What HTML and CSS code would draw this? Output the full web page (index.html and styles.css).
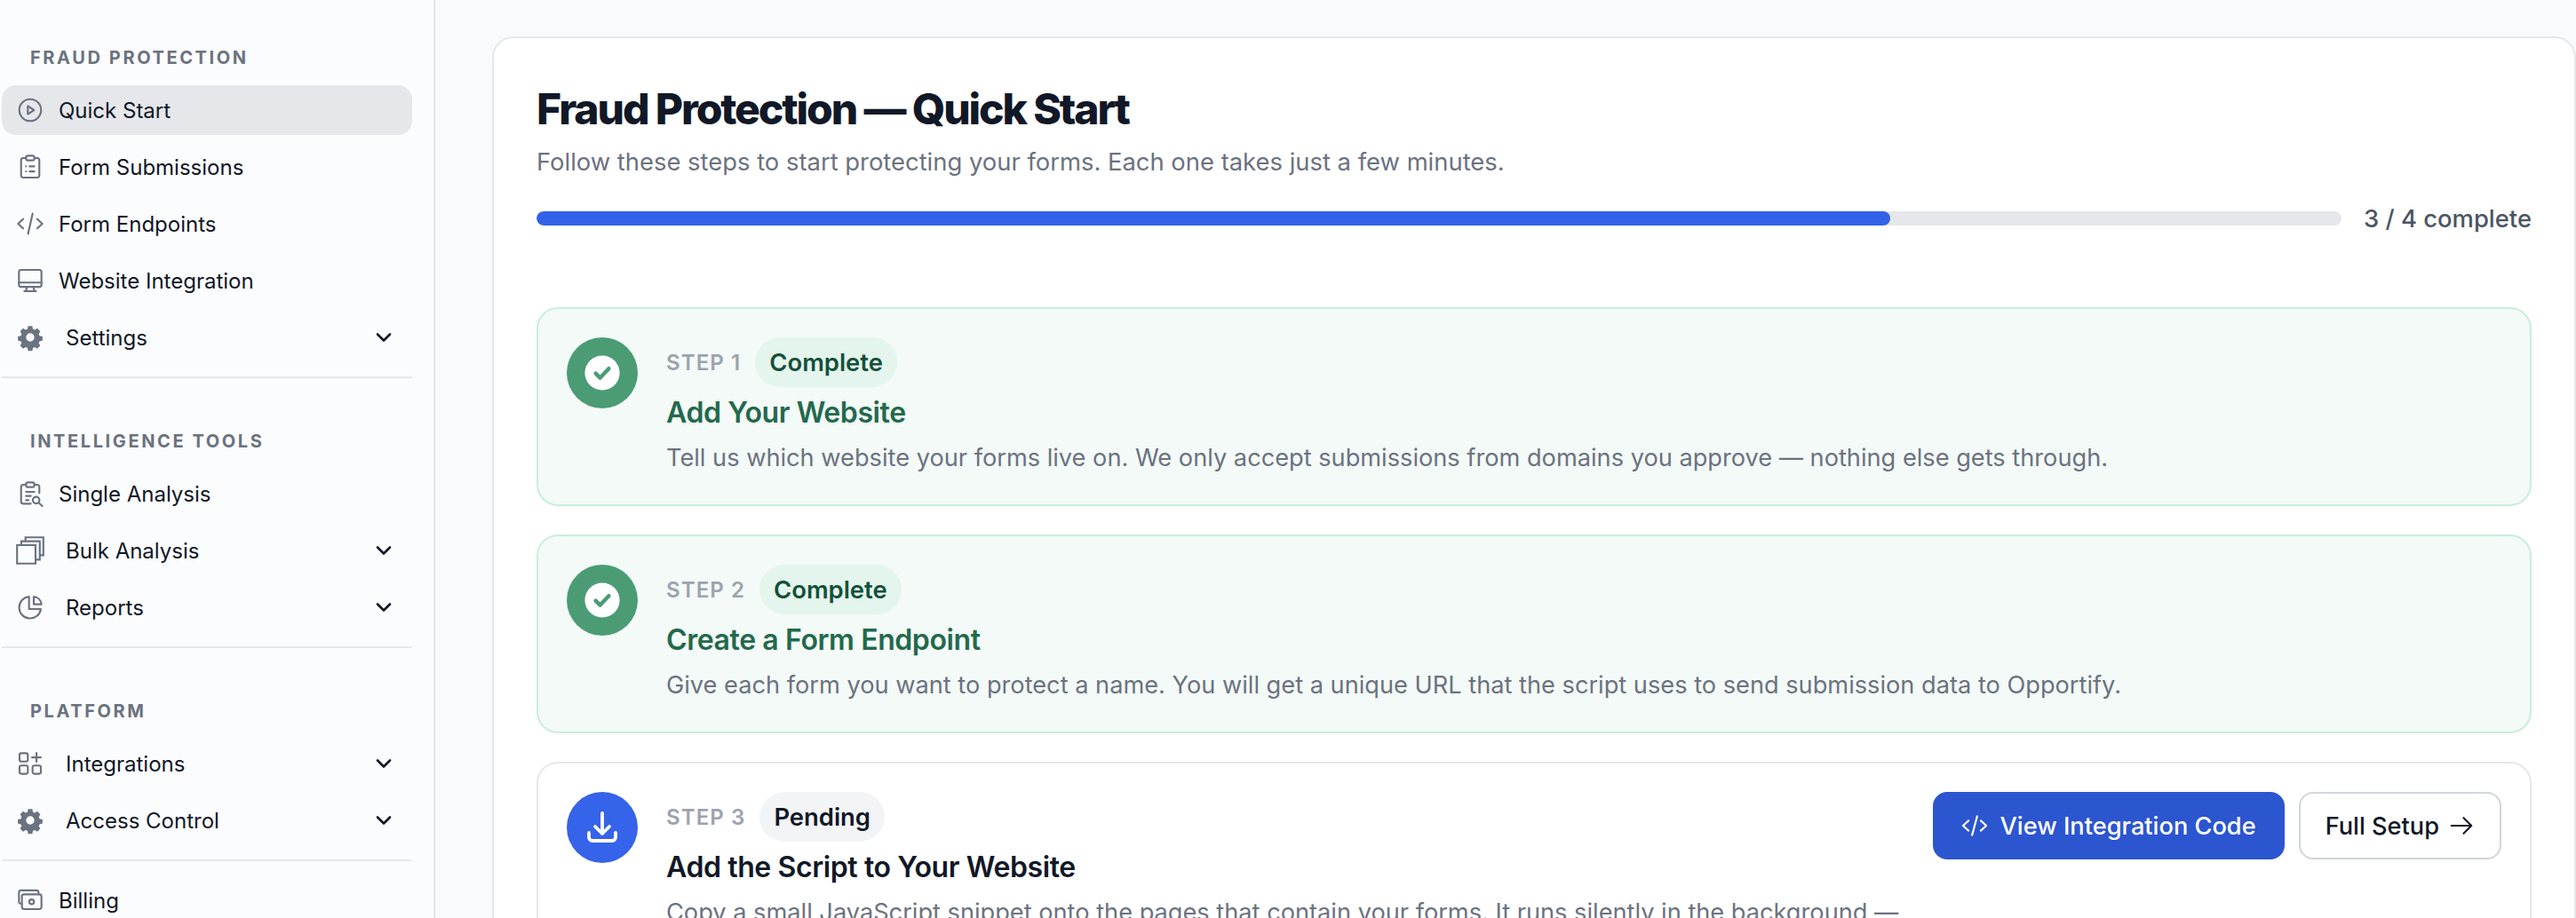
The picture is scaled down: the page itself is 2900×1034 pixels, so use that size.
FILE: index.html
```html
<!DOCTYPE html>
<html lang="en">
<head>
<meta charset="UTF-8" />
<title>Fraud Protection Quick Start</title>
<link rel="stylesheet" href="styles.css">
</head>
<body>
  <aside class="sidebar">
    <div class="nav-label">Fraud Protection</div>
    <nav class="nav-list">
      <a class="nav-item active">
        <svg class="nav-icon" viewBox="0 0 24 24"><circle cx="12" cy="12" r="9.200"/><path d="M10 8.600v6.800l5.200-3.400z"/></svg>
        <span>Quick Start</span>
      </a>
      <a class="nav-item">
        <svg class="nav-icon" viewBox="0 0 24 24"><path d="M8.500 4.500H6A1.800 1.800 0 0 0 4.300 6.300v13A1.800 1.800 0 0 0 6 21h12a1.800 1.800 0 0 0 1.700-1.700v-13A1.800 1.800 0 0 0 18 4.500h-2.500"/><rect x="8.500" y="2.500" width="7" height="4" rx="1.500"/><path d="M8.500 11.500h.01M11.500 11.500h4M8.500 15.800h.01M11.500 15.800h4"/></svg>
        <span>Form Submissions</span>
      </a>
      <a class="nav-item">
        <svg class="nav-icon" viewBox="0 0 24 24"><path d="M6 8 1.800 12 6 16M18 8l4.200 4-4.200 4M14 3.500 10.200 20.500"/></svg>
        <span>Form Endpoints</span>
      </a>
      <a class="nav-item">
        <svg class="nav-icon" viewBox="0 0 24 24"><rect x="2.500" y="3" width="19" height="14.300" rx="1.700"/><path d="M2.500 13.700h19M9.200 17.300l-.7 3.700h7l-.7-3.700M7 21h10"/></svg>
        <span>Website Integration</span>
      </a>
      <a class="nav-item has-menu">
        <svg class="nav-icon solid" viewBox="0 0 24 24"><path fill-rule="evenodd" d="M13.800 2.500l.5 2.500 1.600.7 2.100-1.300 2.500 2.500-1.300 2.200.7 1.500 2.500.6v3.500l-2.500.6-.7 1.500 1.300 2.200-2.500 2.500-2.100-1.300-1.600.7-.5 2.500h-3.600l-.5-2.500-1.600-.7-2.100 1.300-2.500-2.500 1.300-2.200-.7-1.500-2.500-.6v-3.500l2.500-.6.7-1.500-1.300-2.200 2.500-2.500 2.100 1.300 1.600-.7.5-2.500zM12 8.500a3.500 3.500 0 1 0 0 7 3.500 3.500 0 0 0 0-7z"/></svg>
        <span>Settings</span>
        <svg class="chevron" viewBox="0 0 18 12"><path d="M2 2.500l7 7 7-7"/></svg>
      </a>
    </nav>
    <hr class="nav-rule">

    <div class="nav-label">Intelligence Tools</div>
    <nav class="nav-list">
      <a class="nav-item">
        <svg class="nav-icon" viewBox="0 0 24 24"><path d="M8.500 4.500H6A1.700 1.700 0 0 0 4.300 6.200v12.600A1.700 1.700 0 0 0 6 20.500h6.500M15.500 4.500H18a1.700 1.700 0 0 1 1.700 1.700v5.300"/><rect x="8.500" y="2.500" width="7" height="4" rx="1.500"/><path d="M8.500 10.500h7M8.500 14h4M8.500 17.500h2"/><circle cx="17" cy="17.500" r="2.800"/><path d="M19.200 19.700l3 2.800"/></svg>
        <span>Single Analysis</span>
      </a>
      <a class="nav-item has-menu">
        <svg class="nav-icon" viewBox="0 0 24 24"><path d="M.9 7.500h15.600v15.600H.9zM4.500 7.500V4.200h15.600v15.600h-3.600M8 4.200V.9h15.100v15.100h-3" stroke-linejoin="miter" stroke-linecap="butt"/></svg>
        <span>Bulk Analysis</span>
        <svg class="chevron" viewBox="0 0 18 12"><path d="M2 2.500l7 7 7-7"/></svg>
      </a>
      <a class="nav-item has-menu">
        <svg class="nav-icon" viewBox="0 0 24 24"><path d="M11 3a9.200 9.200 0 1 0 10 10.500H11z"/><path d="M15 3v6.500h6.500A7.500 7.500 0 0 0 15 3z"/></svg>
        <span>Reports</span>
        <svg class="chevron" viewBox="0 0 18 12"><path d="M2 2.500l7 7 7-7"/></svg>
      </a>
    </nav>
    <hr class="nav-rule">

    <div class="nav-label">Platform</div>
    <nav class="nav-list">
      <a class="nav-item has-menu">
        <svg class="nav-icon" viewBox="0 0 24 24"><rect x="3" y="3.300" width="7" height="7" rx="1.500"/><rect x="3" y="13.700" width="7" height="7" rx="1.500"/><rect x="14" y="13.700" width="7" height="7" rx="1.500"/><path d="M13.500 6.800H21M17.300 3v7.500"/></svg>
        <span>Integrations</span>
        <svg class="chevron" viewBox="0 0 18 12"><path d="M2 2.500l7 7 7-7"/></svg>
      </a>
      <a class="nav-item has-menu">
        <svg class="nav-icon solid" viewBox="0 0 24 24"><path fill-rule="evenodd" d="M13.800 2.500l.5 2.500 1.600.7 2.100-1.300 2.500 2.500-1.300 2.200.7 1.500 2.500.6v3.500l-2.500.6-.7 1.500 1.300 2.200-2.500 2.500-2.100-1.300-1.600.7-.5 2.500h-3.600l-.5-2.500-1.600-.7-2.100 1.300-2.500-2.500 1.300-2.200-.7-1.500-2.500-.6v-3.500l2.500-.6.7-1.500-1.300-2.200 2.500-2.500 2.100 1.300 1.600-.7.500-2.500zM12 8.500a3.500 3.500 0 1 0 0 7 3.500 3.500 0 0 0 0-7z"/></svg>
        <span>Access Control</span>
        <svg class="chevron" viewBox="0 0 18 12"><path d="M2 2.500l7 7 7-7"/></svg>
      </a>
    </nav>
    <hr class="nav-rule">

    <nav class="nav-list">
      <a class="nav-item">
        <svg class="nav-icon" viewBox="0 0 24 24"><path d="M19 7V5.500A1.800 1.800 0 0 0 17.200 3.700H4.300A1.800 1.800 0 0 0 2.500 5.500v7.700A1.800 1.800 0 0 0 4.300 15H5"/><rect x="5" y="7" width="16.500" height="12.500" rx="1.800"/><circle cx="13.200" cy="13.300" r="2"/></svg>
        <span>Billing</span>
      </a>
    </nav>
  </aside>

  <main class="content">
    <section class="card">
      <h1>Fraud Protection — Quick Start</h1>
      <p class="lead">Follow these steps to start protecting your forms. Each one takes just a few minutes.</p>
      <div class="progress">
        <div class="progress-track"><div class="progress-fill" style="width: 75%"></div></div>
        <span class="progress-label">3 / 4 complete</span>
      </div>

      <div class="steps">
        <article class="step done">
          <div class="step-icon">
            <svg viewBox="0 0 24 24"><circle class="check-disc" cx="12" cy="12" r="9.800"/><path class="check-mark" d="M8.300 12.300l2.500 2.500 4.900-5.200"/></svg>
          </div>
          <div class="step-body">
            <div class="step-meta"><span class="step-num">Step 1</span><span class="badge">Complete</span></div>
            <h2>Add Your Website</h2>
            <p>Tell us which website your forms live on. We only accept submissions from domains you approve — nothing else gets through.</p>
          </div>
        </article>

        <article class="step done">
          <div class="step-icon">
            <svg viewBox="0 0 24 24"><circle class="check-disc" cx="12" cy="12" r="9.800"/><path class="check-mark" d="M8.300 12.300l2.500 2.500 4.900-5.200"/></svg>
          </div>
          <div class="step-body">
            <div class="step-meta"><span class="step-num">Step 2</span><span class="badge">Complete</span></div>
            <h2>Create a Form Endpoint</h2>
            <p>Give each form you want to protect a name. You will get a unique URL that the script uses to send submission data to Opportify.</p>
          </div>
        </article>

        <article class="step">
          <div class="step-icon">
            <svg class="download" viewBox="0 0 24 24"><path d="M12 4v11.500M8 11.500l4 4 4-4M4.500 15v2.500a2 2 0 0 0 2 2h11a2 2 0 0 0 2-2V15"/></svg>
          </div>
          <div class="step-body">
            <div class="step-meta"><span class="step-num">Step 3</span><span class="badge">Pending</span></div>
            <h2>Add the Script to Your Website</h2>
            <p>Copy a small JavaScript snippet onto the pages that contain your forms. It runs silently in the background —</p>
          </div>
          <div class="step-actions">
            <a class="btn btn-primary">
              <svg viewBox="0 0 24 24"><path d="M6.500 7.500 1.500 12l5 4.500M17.500 7.500l5 4.500-5 4.500M14.300 3.500 9.700 20.500"/></svg>
              View Integration Code
            </a>
            <a class="btn btn-outline">Full Setup
              <svg viewBox="0 0 24 24"><path d="M3 12h18M14 5l7 7-7 7"/></svg>
            </a>
          </div>
        </article>
      </div>
    </section>
  </main>
</body>
</html>
```

FILE: styles.css
```css
/* Base */
* {
  box-sizing: border-box;
}
html, body {
  height: 1034px;
  overflow: hidden;
}
body {
  margin: 0;
  display: flex;
  background: #f9fafb;
  font-family: Inter, "Liberation Sans", sans-serif;
  color: #111827;
}

/* Sidebar */
.sidebar {
  flex: 0 0 490px;
  height: 100%;
  padding: 51px 24px 0 2px;
  background: #fbfcfe;
  border-right: 2px solid #e5e7eb;
}
.nav-label {
  margin-left: 32px;
  margin-bottom: 17px;
  font-size: 20px;
  line-height: 28px;
  font-weight: 700;
  letter-spacing: 2.600px;
  text-transform: uppercase;
  color: #6b7280;
}
.nav-list {
  display: flex;
  flex-direction: column;
  gap: 8px;
}
.nav-item {
  display: flex;
  align-items: center;
  height: 56px;
  padding-left: 16px;
  padding-right: 23px;
  border-radius: 16px;
  font-size: 24px;
  color: #111827;
}
.nav-item.active {
  background: #e5e7eb;
}
.nav-icon {
  flex: none;
  width: 32px;
  height: 32px;
  margin-right: 16px;
  fill: none;
  stroke: #6b7280;
  stroke-width: 1.600;
  stroke-linecap: round;
  stroke-linejoin: round;
}
.nav-icon.solid {
  fill: #6b7280;
  stroke: none;
}
.has-menu span {
  flex: 1;
  margin-left: 8px;
}
.chevron {
  flex: none;
  width: 18px;
  height: 12px;
  fill: none;
  stroke: #111827;
  stroke-width: 2.600;
  stroke-linecap: round;
  stroke-linejoin: round;
}
.nav-rule {
  height: 2px;
  margin: 16px 0 57px;
  border: 0;
  background: #e5e7eb;
}
.nav-rule:last-of-type {
  margin-bottom: 16px;
}

/* Main card */
.content {
  flex: 1;
  min-width: 0;
  padding: 41px 0 0 64px;
}
.card {
  padding: 50px 48px 0;
  background: #fff;
  border: 2px solid #e5e7eb;
  border-radius: 24px;
}
h1 {
  margin: 0;
  font-size: 48px;
  line-height: 60px;
  font-weight: 800;
  letter-spacing: -2.100px;
  color: #111827;
}
.lead {
  margin: 9px 0 0;
  font-size: 27.400px;
  line-height: 40px;
  color: #6b7280;
}
.progress {
  display: flex;
  align-items: center;
  gap: 25px;
  margin-top: 24px;
}
.progress-track {
  flex: 1;
  height: 16px;
  border-radius: 8px;
  background: #e5e7eb;
  overflow: hidden;
}
.progress-fill {
  height: 100%;
  border-radius: 8px;
  background: #3162e8;
}
.progress-label {
  font-size: 27.400px;
  line-height: 40px;
  font-weight: 500;
  color: #4b5563;
}

/* Steps */
.steps {
  display: flex;
  flex-direction: column;
  gap: 32px;
  margin-top: 80px;
}
.step {
  display: flex;
  gap: 32px;
  padding: 32px;
  background: #fff;
  border: 2px solid #e5e7eb;
  border-radius: 24px;
}
.step.done {
  background: #f3faf7;
  border-color: #c9eedd;
}
.step-icon {
  flex: none;
  display: flex;
  align-items: center;
  justify-content: center;
  width: 80px;
  height: 80px;
  border-radius: 50%;
  background: #3563e9;
}
.step.done .step-icon {
  background: #4b9c75;
}
.step-icon svg {
  width: 48px;
  height: 48px;
}
.check-disc {
  fill: #fff;
}
.check-mark {
  fill: none;
  stroke: #4b9c75;
  stroke-width: 2.200;
  stroke-linecap: round;
  stroke-linejoin: round;
}
.download {
  fill: none;
  stroke: #fff;
  stroke-width: 1.900;
  stroke-linecap: round;
  stroke-linejoin: round;
}
.step-body {
  flex: 1;
  min-width: 0;
}
.step-meta {
  display: flex;
  align-items: center;
  gap: 16px;
}
.step-num {
  font-size: 24px;
  font-weight: 600;
  letter-spacing: 1.100px;
  text-transform: uppercase;
  color: #9ca3af;
}
.badge {
  padding: 8px 16px;
  border-radius: 28px;
  background: #f3f4f6;
  font-size: 27.400px;
  line-height: 40px;
  font-weight: 600;
  color: #111827;
}
.step.done .badge {
  background: #e4f5ed;
  color: #14503a;
}
h2 {
  margin: 5px 0 0;
  font-size: 32px;
  line-height: 48px;
  font-weight: 600;
  letter-spacing: -0.400px;
  color: #111827;
}
.step.done h2 {
  color: #23694c;
}
.step-body p {
  margin: 7px 0 0;
  font-size: 27.200px;
  line-height: 40px;
  color: #6b7280;
}
.step-actions {
  flex: none;
  display: flex;
  gap: 16px;
}
.btn {
  display: flex;
  align-items: center;
  gap: 10px;
  height: 76px;
  padding: 0 28px;
  border-radius: 16px;
  font-size: 27.200px;
  font-weight: 500;
}
.btn svg {
  width: 30px;
  height: 30px;
  fill: none;
  stroke: currentColor;
  stroke-width: 1.700;
  stroke-linecap: round;
  stroke-linejoin: round;
}
.btn-primary {
  gap: 14px;
  padding: 0 32px;
  background: #2c55d0;
  color: #fff;
}
.btn-outline {
  background: #fff;
  border: 2px solid #d1d5db;
  color: #111827;
}
```
